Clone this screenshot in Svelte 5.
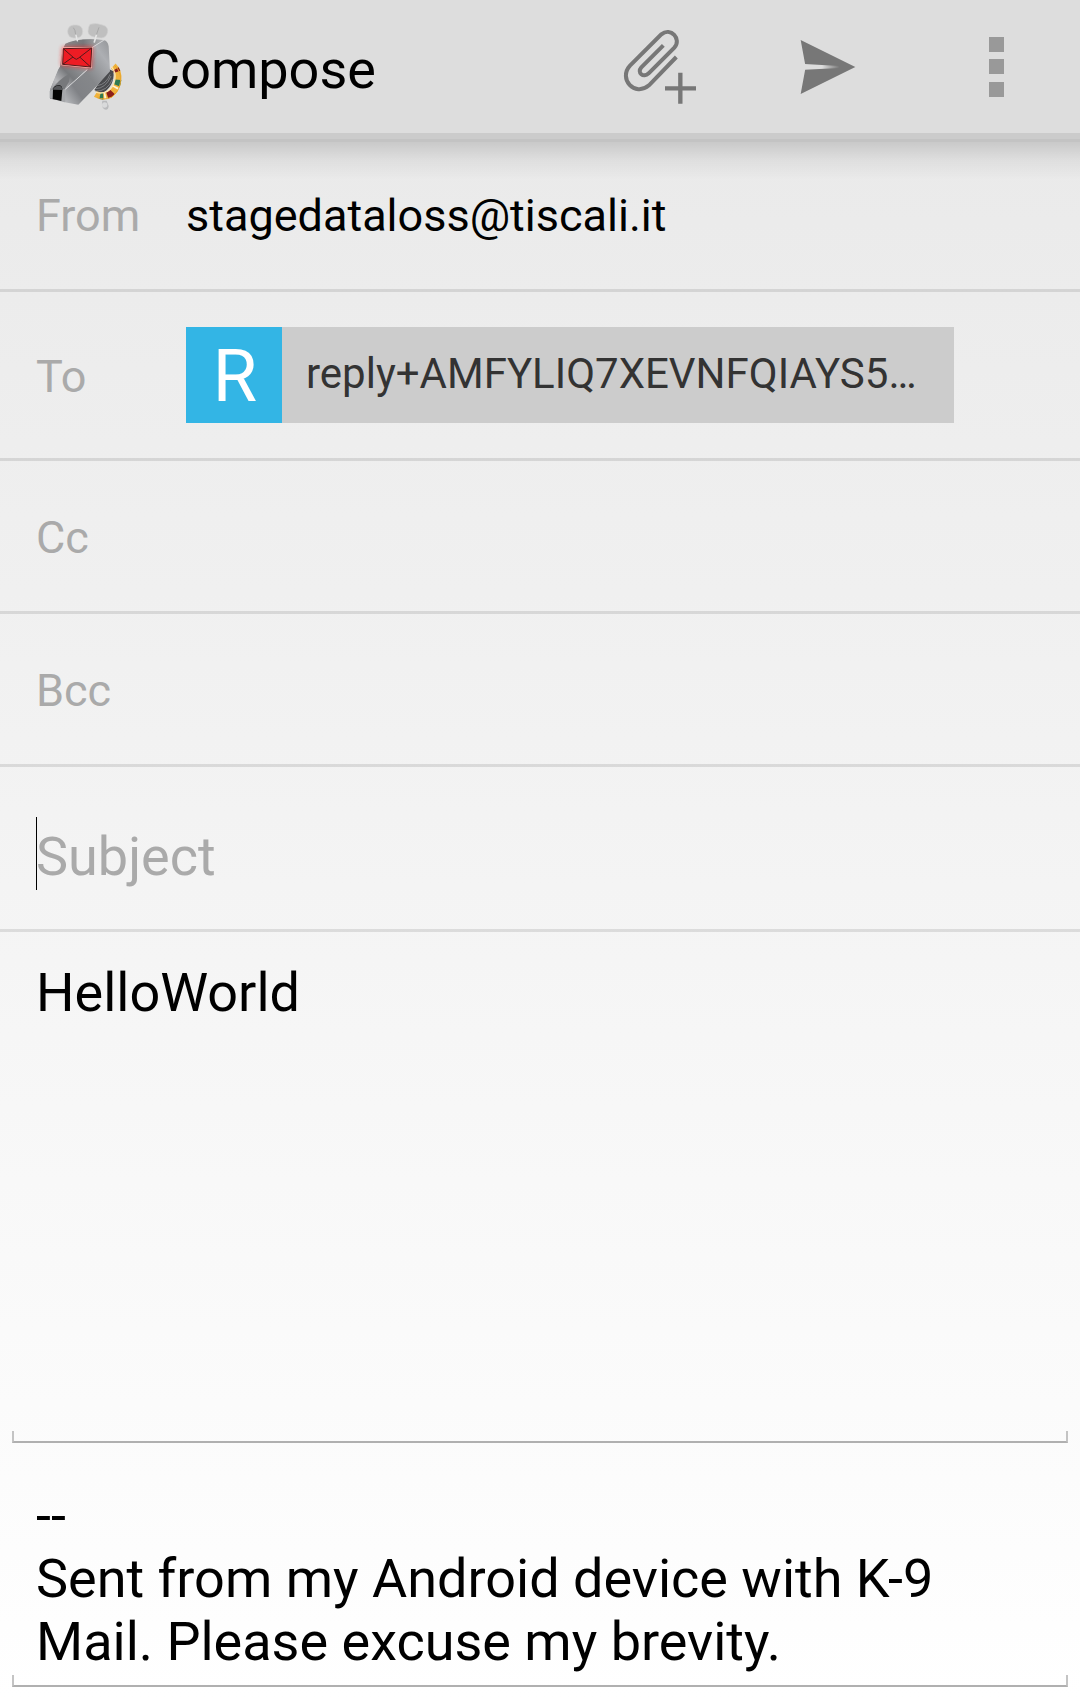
<script>
  let cc = $state('');
  let bcc = $state('');
  let subject = $state('');
  let message = $state('HelloWorld');
  let signature = $state(
    '--\nSent from my Android device with K-9 Mail. Please excuse my brevity.'
  );
  const recipients = [{ initial: 'R', address: 'reply+AMFYLIQ7XEVNFQIAYS5…' }];
</script>

<div class="screen">
  <header class="bar">
    <svg class="logo" viewBox="0 0 330 330" aria-hidden="true">
      <defs>
        <linearGradient id="face" x1="0" y1="0" x2="1" y2="0.6">
          <stop offset="0" stop-color="#9a9b9d" />
          <stop offset="0.45" stop-color="#77787b" />
          <stop offset="0.75" stop-color="#a9abae" />
          <stop offset="1" stop-color="#8b8d90" />
        </linearGradient>
        <linearGradient id="top" x1="0" y1="0" x2="1" y2="0">
          <stop offset="0" stop-color="#8a8b8d" />
          <stop offset="0.5" stop-color="#77787a" />
          <stop offset="1" stop-color="#b4b5b7" />
        </linearGradient>
        <linearGradient id="side" x1="0" y1="1" x2="1" y2="0">
          <stop offset="0" stop-color="#c0c2c5" />
          <stop offset="0.25" stop-color="#808286" />
          <stop offset="0.5" stop-color="#85878a" />
          <stop offset="0.8" stop-color="#adafb3" />
          <stop offset="1" stop-color="#939598" />
        </linearGradient>
        <linearGradient id="snout" x1="0" y1="1" x2="1" y2="0">
          <stop offset="0" stop-color="#808184" />
          <stop offset="0.35" stop-color="#b9babd" />
          <stop offset="0.6" stop-color="#77797c" />
          <stop offset="1" stop-color="#a0a2a5" />
        </linearGradient>
        <filter id="glow" x="-30%" y="-30%" width="160%" height="160%">
          <feGaussianBlur stdDeviation="6" />
        </filter>
      </defs>
      <path d="M217 272q-4 18 6 26 12 4 13-10l-6-16z" fill="#b9babc" />
      <circle cx="224" cy="285" r="8" fill="#d9dadb" />
      <path d="M238 178L250 184Q256 228 214 252L193 240 205 222Z" fill="#4a4b4e" />
      <path d="M196 236q31 0 47-38M195 244q38 0 52-36M202 227q27-4 38-34" fill="none" stroke="#9a9c9f" stroke-width="2" />
      <g fill="none" stroke-width="20">
        <path d="M250 168C274 190 266 236 239 253Q217 264 197 252" stroke="#f0b23c" />
        <path d="M250 168C274 190 266 236 239 253Q217 264 197 252" stroke="#8c1f1a" pathLength="100" stroke-dasharray="0 8 7 46 13 26" />
        <path d="M250 168C274 190 266 236 239 253Q217 264 197 252" stroke="#2f7a52" pathLength="100" stroke-dasharray="0 32 12 39 7 10" />
        <path d="M250 168C274 190 266 236 239 253Q217 264 197 252" stroke="#fff3d2" pathLength="100" stroke-dasharray="0 47 4 26 4 19" />
      </g>
      <path d="M244 170C264 192 256 230 232 244Q214 253 196 246" fill="none" stroke="#ffe6ae" stroke-width="4" />
      <path d="M254 167C282 190 276 240 244 262Q220 272 202 262" fill="none" stroke="#e8a52c" stroke-width="3" />
      <path d="M97 124L106 101Q145 83 220 90L187 112 176 176 145 196 60 240 90 170Z" fill="url(#face)" />
      <path d="M97 126L106 103Q146 83 222 91L187 112Z" fill="url(#top)" />
      <path d="M187 112L222 91Q233 92 236 109L240 184 202 226 145 284 100 276 106 237 172 178Z" fill="url(#side)" />
      <path d="M60 239L85 178 100 158 172 176 106 240 106 275 60 266Z" fill="url(#snout)" />
      <path d="M120 190Q84 210 64 240L102 241 117 215Z" fill="#77797c" />
      <path d="M59 243l10-6 3 31-13-4zM93 239l15-2-4 40-15-4z" fill="#a6a8ab" />
      <path d="M69 238q3-13 20-12 8 2 8 14l-3 33-26-6z" fill="#050505" />
      <path d="M69 239q3-13 20-12 8 2 8 13z" fill="#55575a" />
      <path d="M106 238l66-59M187 112l34-21" stroke="#d5d6d8" stroke-width="3" fill="none" />
      <path d="M97 112L188 111 185 175 94 166Z" fill="#f22" opacity=".75" filter="url(#glow)" />
      <path d="M97 112L188 111 185 175 94 166Z" fill="#ffb3ac" />
      <path d="M100 116L185 114 182 171 98 163Z" fill="#ed1c24" stroke="#54191b" stroke-width="3" />
      <path d="M100 116L132 144q7 8 14 0L185 114M98 163l31-22M182 171l-32-29" fill="none" stroke="#54191b" stroke-width="3" />
      <rect x="113" y="45" width="45" height="39" rx="18" fill="#bfbfbf" stroke="#d2d2d2" stroke-width="2" />
      <path d="M180 43q18-6 38 2 18 5 15 22-5 18-20 17-40-2-39-20 0-13 6-21z" fill="#bfbfbf" stroke="#d2d2d2" stroke-width="2" />
      <path d="M130 53q6 6 7 21l5 17M207 52l-7 20-6 22" fill="none" stroke="#9c9c9c" stroke-width="2" />
      <path d="M138 76l4 16M199 76l-6 20" stroke="#e6e6e6" stroke-width="5" stroke-linecap="round" />
    </svg>
    <h1>Compose</h1>
    <button type="button" class="action" aria-label="Add attachment">
      <svg viewBox="-72 -30 504 399" fill="none" stroke="#777">
        <path
          d="M190 106L124 172C110 188 130 205 146 190L223 113C246 87 212 50 184 73L90 167C54 206 104 262 147 226L229 141"
          stroke-width="12"
        />
        <path d="M195 235h93M241 188v93" stroke-width="13" />
      </svg>
    </button>
    <button type="button" class="action" aria-label="Send">
      <svg viewBox="432 -30 504 399">
        <defs>
          <linearGradient id="slit" x1="0" x2="1">
            <stop offset="0" stop-color="#ddd" />
            <stop offset="0.5" stop-color="#ddd" />
            <stop offset="1" stop-color="#777" />
          </linearGradient>
        </defs>
        <path d="M602 90L766 171 602 252 617 171Z" fill="#777" />
        <path d="M614 162L718 168V174L614 179Z" fill="url(#slit)" />
      </svg>
    </button>
    <button type="button" class="action" aria-label="More options">
      <svg viewBox="0 0 168 133" fill="#999">
        <path d="M77 37h15v15h-15zM77 59h15v15h-15zM77 82h15v15h-15z" />
      </svg>
    </button>
  </header>

  <form class="compose" onsubmit={(e) => e.preventDefault()}>
    <div class="row from">
      <span class="label" id="from-label">From</span>
      <button type="button" class="identity" aria-describedby="from-label">stagedataloss@tiscali.it</button>
    </div>
    <div class="row to">
      <span class="label">To</span>
      {#each recipients as r}
        <button type="button" class="chip">
          <span class="initial">{r.initial}</span>
          <span class="address">{r.address}</span>
        </button>
      {/each}
    </div>
    <div class="row">
      <label class="label" for="cc">Cc</label>
      <input id="cc" type="text" bind:value={cc} />
    </div>
    <div class="row">
      <label class="label" for="bcc">Bcc</label>
      <input id="bcc" type="text" bind:value={bcc} />
    </div>
    <div class="row subject">
      <span class="caret"></span>
      <input type="text" aria-label="Subject" placeholder="Subject" bind:value={subject} />
    </div>
    <div class="area message">
      <textarea aria-label="Message text" bind:value={message}></textarea>
    </div>
    <div class="area signature">
      <textarea aria-label="Signature" rows="3" bind:value={signature}></textarea>
    </div>
  </form>
</div>

<style>
  :global(body) {
    margin: 0;
  }
  .screen,
  .screen *,
  .area::after {
    box-sizing: border-box;
  }
  .screen {
    display: flex;
    flex-direction: column;
    min-height: 100vh;
    font-family: Roboto, sans-serif;
    font-size: 54px;
    line-height: 63px;
    color: #000;
    background: linear-gradient(#e8e8e8, #fff);
  }
  button,
  input,
  textarea {
    margin: 0;
    padding: 0;
    border: 0;
    border-radius: 0;
    outline: 0;
    background: none;
    color: inherit;
    font: inherit;
  }
  .bar {
    display: flex;
    align-items: center;
    height: 142px;
    padding-left: 30px;
    background: linear-gradient(#ddd 133px, #cbcbcb 133px 139px, #c3c3c3 139px);
  }
  .logo {
    flex: none;
    width: 110px;
    height: 110px;
    margin-bottom: 12px;
  }
  h1 {
    flex: 1;
    margin: 0;
    padding: 0 0 4px 5px;
    font-size: 54px;
    font-weight: 400;
  }
  .action {
    flex: none;
    align-self: flex-start;
    width: 168px;
    height: 133px;
  }
  .action svg {
    display: block;
    width: 168px;
    height: 133px;
  }
  .compose {
    display: flex;
    flex: 1;
    flex-direction: column;
    padding-bottom: 12px;
    background: linear-gradient(rgba(0, 0, 0, 0.14), rgba(0, 0, 0, 0.05) 18px, transparent 38px);
  }
  .row {
    position: relative;
    display: flex;
    align-items: center;
    height: 153px;
    padding: 0 36px;
    border-bottom: 3px solid rgba(0, 0, 0, 0.1);
    font-size: 45px;
    line-height: 53px;
  }
  .row.from {
    height: 150px;
  }
  .row.to {
    height: 169px;
  }
  .label {
    flex: none;
    width: 150px;
    padding-top: 2px;
    color: #aaa;
  }
  .from .label {
    padding-top: 0;
  }
  .row input {
    flex: 1;
    min-width: 0;
  }
  .chip {
    display: flex;
    width: 768px;
    min-width: 0;
    height: 96px;
    background: #ccc;
    color: #333;
    font-size: 42px;
    line-height: 94px;
    text-align: left;
  }
  .initial {
    flex: none;
    width: 96px;
    height: 96px;
    padding-left: 2px;
    background: #33b5e5;
    color: #fff;
    font-size: 72px;
    line-height: 100px;
    text-align: center;
  }
  .address {
    flex: 1;
    min-width: 0;
    padding: 0 24px;
    overflow: hidden;
    white-space: nowrap;
    text-overflow: ellipsis;
  }
  .row.subject {
    height: 165px;
    padding-top: 16px;
    font-size: 54px;
    line-height: 63px;
  }
  .subject input::placeholder {
    color: #aaa;
    opacity: 1;
  }
  .caret {
    position: absolute;
    top: 50px;
    left: 36px;
    width: 1px;
    height: 73px;
    background: #000;
  }
  .area {
    position: relative;
    display: flex;
    margin: 0 12px;
    padding: 0 24px;
  }
  .area::after {
    content: '';
    position: absolute;
    right: 0;
    bottom: 0;
    left: 0;
    height: 12px;
    border: 2px solid #c4c4c4;
    border-top: 0;
    border-bottom-color: #b0b0b0;
    pointer-events: none;
  }
  .area textarea {
    flex: 1;
    min-width: 0;
    overflow: hidden;
    resize: none;
  }
  .message {
    flex: 1;
    padding-top: 29px;
    padding-bottom: 12px;
  }
  .signature {
    padding-top: 41px;
    padding-bottom: 14px;
  }
</style>
